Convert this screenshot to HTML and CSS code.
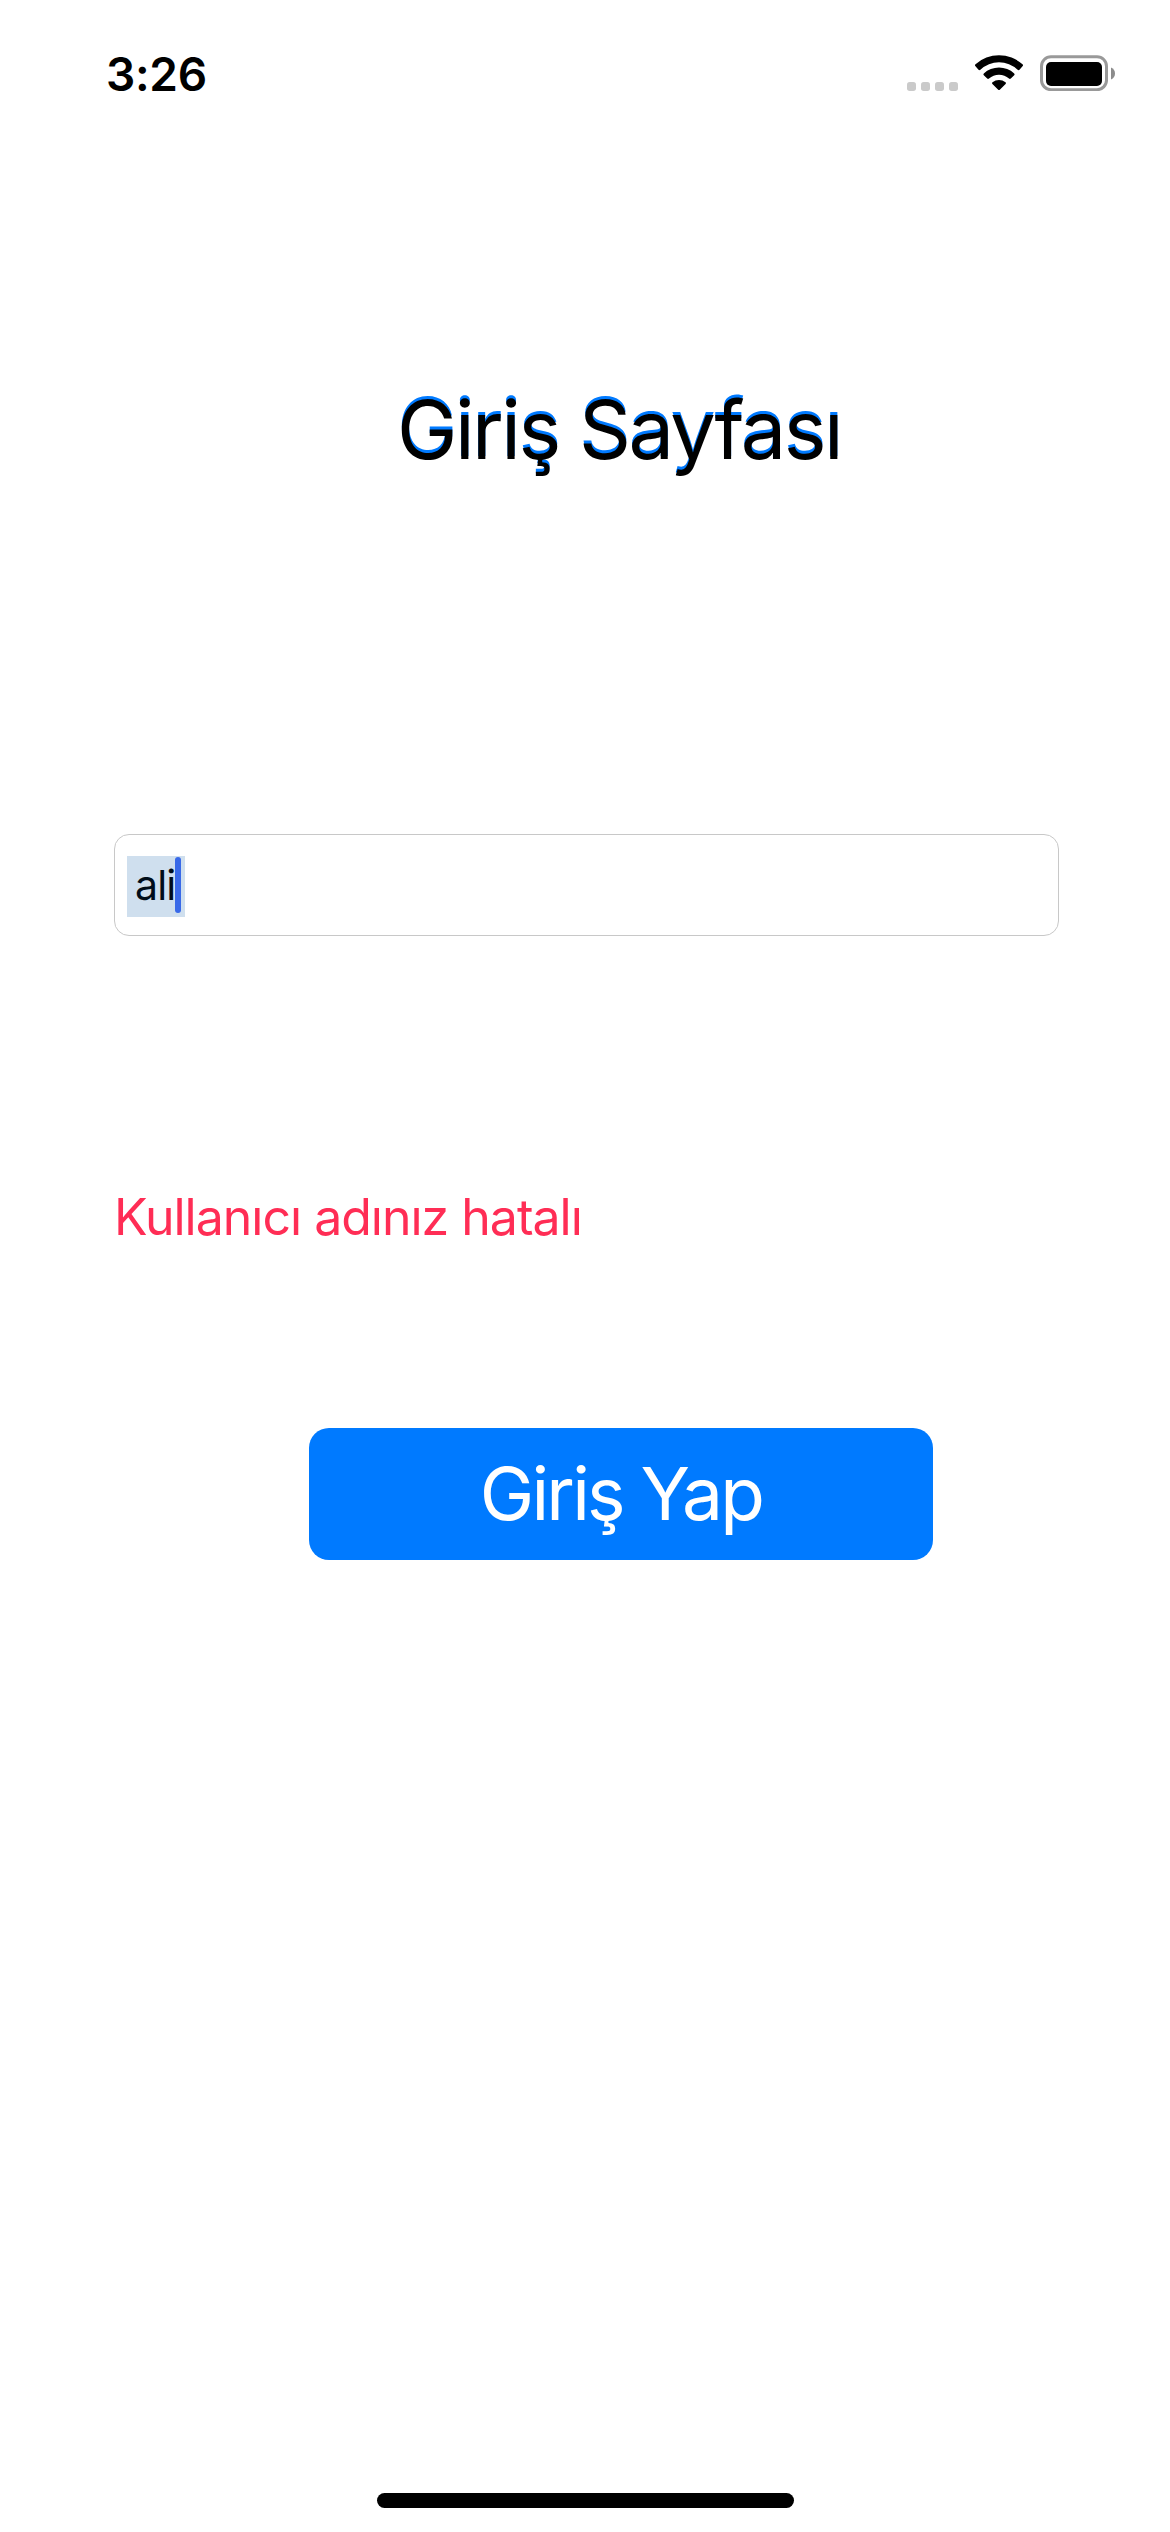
FILE: index.html
```html
<!DOCTYPE html>
<html lang="tr">
<head>
<meta charset="utf-8">
<title>Giriş Sayfası</title>
<link rel="stylesheet" href="styles.css">
</head>
<body>
<div class="screen">
  <header class="status-bar">
    <span class="time">3:26</span>
    <svg class="status-icons" width="208" height="36" viewBox="0 0 208 36" aria-hidden="true">
      <g fill="#cacaca">
        <rect x="0" y="27" width="9" height="9" rx="2.7"/>
        <rect x="14" y="27" width="9" height="9" rx="2.7"/>
        <rect x="28" y="27" width="9" height="9" rx="2.7"/>
        <rect x="42" y="27" width="9" height="9" rx="2.7"/>
      </g>
      <g>
        <path d="M68.5 11.3 Q67.4 10.3 68.5 9.3 A35 35 0 0 1 115.5 9.3 Q116.600 10.3 115.5 11.3 L112.500 14.700 Q111.600 15.600 110.600 14.700 A27 27 0 0 0 73.400 14.700 Q72.400 15.600 71.500 14.700 Z"/>
        <path d="M76.800 20.300 Q75.900 19.400 76.800 18.500 A22.500 22.500 0 0 1 107.200 18.500 Q108.100 19.400 107.200 20.300 L103.800 23.600 Q102.900 24.400 102 23.600 A15 15 0 0 0 82 23.600 Q81.100 24.400 80.200 23.600 Z"/>
        <path d="M85.400 28.900 Q84.500 28 85.500 27.200 A10.500 10.500 0 0 1 98.500 27.200 Q99.500 28 98.600 28.900 L92.800 34.700 Q92 35.400 91.200 34.700 Z"/>
      </g>
      <rect x="134.500" y="1.700" width="65" height="33" rx="9.500" fill="none" stroke="#999" stroke-width="3"/>
      <rect x="139" y="7" width="56" height="24" rx="5"/>
      <path d="M204 12.500 Q208 14.300 208 18.500 Q208 22.700 204 24.500 Z" fill="#8c8c8c"/>
    </svg>
  </header>
  <main class="login">
    <h1 class="title">Giriş Sayfası</h1>
    <div class="field"><span class="selection">ali<i class="caret"></i></span></div>
    <p class="error">Kullanıcı adınız hatalı</p>
    <button class="submit"><span class="label">Giriş Yap</span></button>
  </main>
  <div class="home-indicator"></div>
</div>
</body>
</html>
```
FILE: styles.css
```css
* { box-sizing: border-box; }
body { margin: 0; background: #fff; color: #000; font-family: Inter, "Noto Sans", sans-serif; }
.screen { width: 1170px; height: 2532px; display: flex; flex-direction: column; }
.status-bar { height: 132px; padding: 44px 55px 0 106px; display: flex; justify-content: space-between; align-items: flex-start; }
.time { font-size: 46px; line-height: 60px; font-weight: 600; letter-spacing: -0.3px; white-space: nowrap; }
.status-icons { margin-top: 11px; }
.login { flex: 1; display: flex; flex-direction: column; align-items: flex-start; padding: 247px 111px 0 114px; }
.title { margin: 0 0 0 283px; font-size: 81px; line-height: 102px; font-weight: 400; letter-spacing: -2.5px; white-space: nowrap; text-shadow: 0 -3px 0 #007aff; }
.field { width: 945px; height: 102px; margin-top: 353px; padding: 21px 12px; border: 1px solid #c8c8c8; border-radius: 15px; }
.selection { display: block; position: relative; width: 58px; height: 61px; padding-left: 8px; background: #cfdfee; color: #000d1a; font-size: 41px; line-height: 59px; letter-spacing: -0.8px; white-space: nowrap; }
.caret { position: absolute; left: 48px; top: 1px; width: 6px; height: 56px; border-radius: 3px; background: #3869e8; }
.error { margin: 251px 0 0; font-size: 50px; line-height: 60px; letter-spacing: -1px; color: #ff2d55; white-space: nowrap; }
.submit { width: 624px; height: 132px; margin: 181px 0 0 195px; padding: 0; border: 0; border-radius: 20px; background: #007aff; color: #fff; font: 400 73px/132px Inter, "Noto Sans", sans-serif; letter-spacing: -2.8px; }
.label { display: block; white-space: nowrap; }
.home-indicator { width: 417px; height: 15px; margin: 0 auto 24px 377px; border-radius: 8px; background: #000; }
```
